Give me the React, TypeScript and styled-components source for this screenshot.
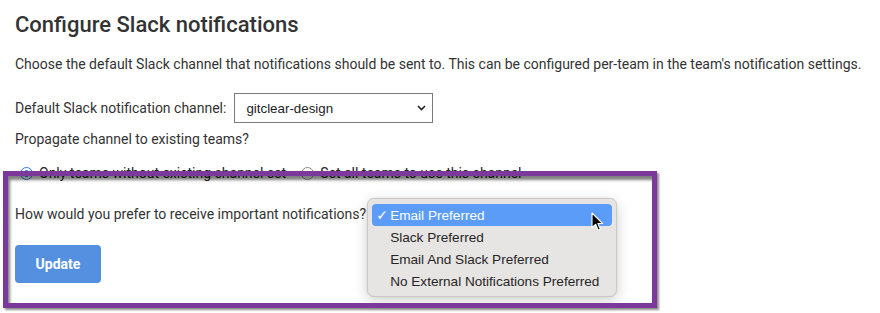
import React from 'react';
import styled, { createGlobalStyle } from 'styled-components';

const text = '#333333';
const purple = '#7b3a9b';
const buttonBlue = '#548fe0';
const menuBlue = '#5a9cf8';

const GlobalStyle = createGlobalStyle`
  html, body {
    margin: 0;
    padding: 0;
    background: #ffffff;
  }
  body {
    font-family: Roboto, "Liberation Sans", sans-serif;
    color: ${text};
    font-size: 14px;
  }
`;

const menuOptions = [
  'Email Preferred',
  'Slack Preferred',
  'Email And Slack Preferred',
  'No External Notifications Preferred'
];

const App = () => {
  return (
    <>
      <GlobalStyle />
      <Page>
        <Title>Configure Slack notifications</Title>
        <Intro>
          Choose the default Slack channel that notifications should be sent to. This can be configured per-team in the team's notification settings.
        </Intro>
        <FieldRow>
          <Label>Default Slack notification channel:</Label>
          <SelectBox>
            <span>gitclear-design</span>
            <Chevron />
          </SelectBox>
        </FieldRow>
        <Question>Propagate channel to existing teams?</Question>
        <RadioRow>
          <RadioOption>
            <Radio checked />
            Only teams without existing channel set
          </RadioOption>
          <RadioOption>
            <Radio />
            Set all teams to use this channel
          </RadioOption>
        </RadioRow>
        <PrefRow>
          <Label>How would you prefer to receive important notifications?</Label>
          <MenuAnchor>
            <Menu>
              {menuOptions.map((option, i) => (
                <MenuItem key={option} active={i === 0}>
                  <CheckSlot>{i === 0 ? '✓' : ''}</CheckSlot>
                  {option}
                </MenuItem>
              ))}
              <Cursor />
            </Menu>
          </MenuAnchor>
        </PrefRow>
        <UpdateButton>Update</UpdateButton>
        <Highlight />
      </Page>
    </>
  );
};

export default App;

const Chevron = () => (
  <svg width="9" height="6" viewBox="0 0 9 6">
    <path d="M1 1 L4.5 4.6 L8 1" fill="none" stroke="#222" strokeWidth="1.5" />
  </svg>
);

const CursorSvg = ({ className }: { className?: string }) => (
  <svg className={className} width="14" height="20" viewBox="0 0 14 20">
    <path
      d="M1 1 L1 15.5 L4.6 12.3 L7.2 18.2 L9.4 17.2 L6.9 11.5 L11.6 11.5 Z"
      fill="#000"
      stroke="#fff"
      strokeWidth="1.1"
      strokeLinejoin="round"
    />
  </svg>
);

const Page = styled.div`
  position: relative;
  padding: 0 15px;
  height: 313px;
  box-sizing: border-box;
  overflow: hidden;
`;

const Title = styled.h2`
  margin: 12px 0 0;
  font-size: 22px;
  line-height: 26px;
  font-weight: 500;
  color: ${text};
`;

const Intro = styled.p`
  margin: 16px 0 0;
  line-height: 20px;
  white-space: nowrap;
`;

const FieldRow = styled.div`
  display: flex;
  align-items: center;
  gap: 8px;
  margin-top: 19px;
  height: 30px;
`;

const Label = styled.span`
  line-height: 20px;
  white-space: nowrap;
`;

const SelectBox = styled.div`
  box-sizing: border-box;
  width: 199px;
  height: 30px;
  border: 1px solid #7a7a7a;
  display: flex;
  align-items: center;
  justify-content: space-between;
  padding: 0 6px 0 11px;
  font-family: "Liberation Sans", Arial, sans-serif;
  font-size: 13.33px;
  color: #222;
  background: #fff;
`;

const Question = styled.div`
  margin-top: 6px;
  line-height: 20px;
`;

const RadioRow = styled.div`
  display: flex;
  align-items: center;
  margin-top: 14px;
  height: 20px;
  gap: 10px;
`;

const RadioOption = styled.label`
  display: flex;
  align-items: center;
  white-space: nowrap;
  line-height: 20px;
  color: #222;
`;

const Radio = styled.span<{ checked?: boolean }>`
  box-sizing: border-box;
  width: 13px;
  height: 13px;
  margin: 0 6px 0 5px;
  border-radius: 50%;
  border: 1px solid ${p => (p.checked ? '#2f7be8' : '#8a8a8a')};
  background: ${p => (p.checked ? 'radial-gradient(circle, #2f7be8 0 3px, #fff 3.6px)' : '#fff')};
`;

const PrefRow = styled.div`
  display: flex;
  align-items: center;
  margin-top: 21px;
  height: 20px;
`;

const MenuAnchor = styled.div`
  position: relative;
  margin-left: 1px;
  width: 250px;
  height: 20px;
`;

const Menu = styled.div`
  position: absolute;
  top: -6px;
  left: 0;
  box-sizing: border-box;
  width: 250px;
  height: 99px;
  padding: 5px 4px 4px;
  border: 1px solid #cbc9c8;
  border-radius: 7px;
  background: #e7e5e4;
  box-shadow: 0 4px 14px rgba(0, 0, 0, 0.18), 0 0 2px rgba(0, 0, 0, 0.08);
  z-index: 2;
`;

const MenuItem = styled.div<{ active?: boolean }>`
  display: flex;
  align-items: center;
  height: 22px;
  padding-left: 4px;
  border-radius: 4px;
  font-family: "Liberation Sans", Arial, sans-serif;
  font-size: 13.6px;
  white-space: nowrap;
  color: ${p => (p.active ? '#ffffff' : '#262626')};
  background: ${p => (p.active ? menuBlue : 'transparent')};
`;

const CheckSlot = styled.span`
  display: inline-block;
  width: 14px;
  font-family: "DejaVu Sans", sans-serif;
  font-size: 14px;
`;

const Cursor = styled(CursorSvg)`
  position: absolute;
  left: 223px;
  top: 13px;
`;

const UpdateButton = styled.button`
  display: block;
  margin-top: 21px;
  width: 86px;
  height: 38px;
  border: none;
  border-radius: 4px;
  background: ${buttonBlue};
  color: #ffffff;
  font-family: Roboto, sans-serif;
  font-size: 14px;
  font-weight: 700;
  padding: 0;
`;

const Highlight = styled.div`
  position: absolute;
  left: 3px;
  top: 171px;
  width: 654px;
  height: 137px;
  box-sizing: border-box;
  border: 5px solid ${purple};
  box-shadow: 2px 2px 2px rgba(0, 0, 0, 0.45), inset 2px 4px 3px rgba(0, 0, 0, 0.5);
  pointer-events: none;
  z-index: 3;
`;
